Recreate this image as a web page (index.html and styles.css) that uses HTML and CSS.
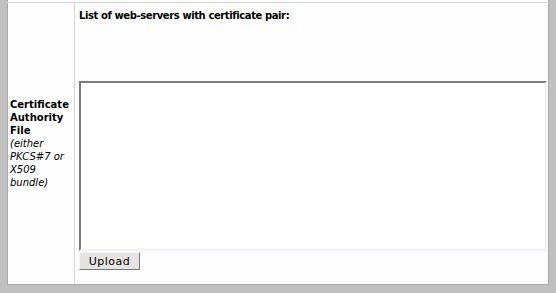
FILE: index.html
```html
<!DOCTYPE html>
<html lang="en">

<head>
    <meta charset="utf-8">
    <title>Certificate Authority</title>
    <link rel="stylesheet" href="styles.css">
</head>

<body>
    <div class="panel">
        <div class="row-prev"></div>
        <div class="row">
            <div class="label">
                <b>Certificate Authority File</b>
                <i>(either PKCS#7 or X509 bundle)</i>
            </div>
            <div class="field">
                <h3>List of web-servers with certificate pair:</h3>
                <div class="serverlist"></div>
                <textarea class="certbox"></textarea>
                <button class="upload">Upload</button>
            </div>
        </div>
    </div>
</body></html>
```

FILE: styles.css
```css
* {
    box-sizing: border-box;
}

body {
    margin: 0;
    background: #ffffff;
    font-family: "DejaVu Sans", Verdana, sans-serif;
    font-size: 10px;
    color: #000;
}

.panel {
    width: 556px;
    height: 293px;
    border-left: 7px solid #c0c0c0;
    border-right: 7px solid #c0c0c0;
    border-bottom: 8px solid #c0c0c0;
    background: #fdfdfd;
    box-shadow: inset 1px 0 0 #a9a9a9, inset -1px -1px 0 #a9a9a9;
}

.row-prev {
    height: 2px;
}

.row {
    display: grid;
    grid-template-columns: 68px 1fr;
    border-top: 1px solid #d6d6d6;
    height: 282px;
}

.label {
    border-right: 1px solid #d6d6d6;
    padding: 0 2px 0 3px;
    display: flex;
    flex-direction: column;
    justify-content: center;
    line-height: 13px;
}

.label b,
.label i {
    display: block;
}

.field {
    padding: 0 2px 0 3px;
    display: flex;
    flex-direction: column;
    align-items: flex-start;
}

h3 {
    margin: 6px 0 0 1px;
    font-size: 10px;
    line-height: 13px;
    letter-spacing: -0.4px;
}

.serverlist {
    height: 59px;
}

.certbox {
    width: 468px;
    height: 170px;
    margin: 0 0 0 1px;
    border: 2px solid;
    border-color: #7c7c7c #f6f0f0 #eef2fa #7c7c7c;
    background: #fff;
    resize: none;
}

.upload {
    margin: 1px 0 0 1px;
    width: 61px;
    height: 18px;
    padding: 0;
    border: 1px solid;
    border-color: #f4f4f4 #777 #777 #f4f4f4;
    background: #e6e4e0;
    font-family: "DejaVu Sans", Verdana, sans-serif;
    font-size: 11px;
    letter-spacing: 0.5px;
}
```
